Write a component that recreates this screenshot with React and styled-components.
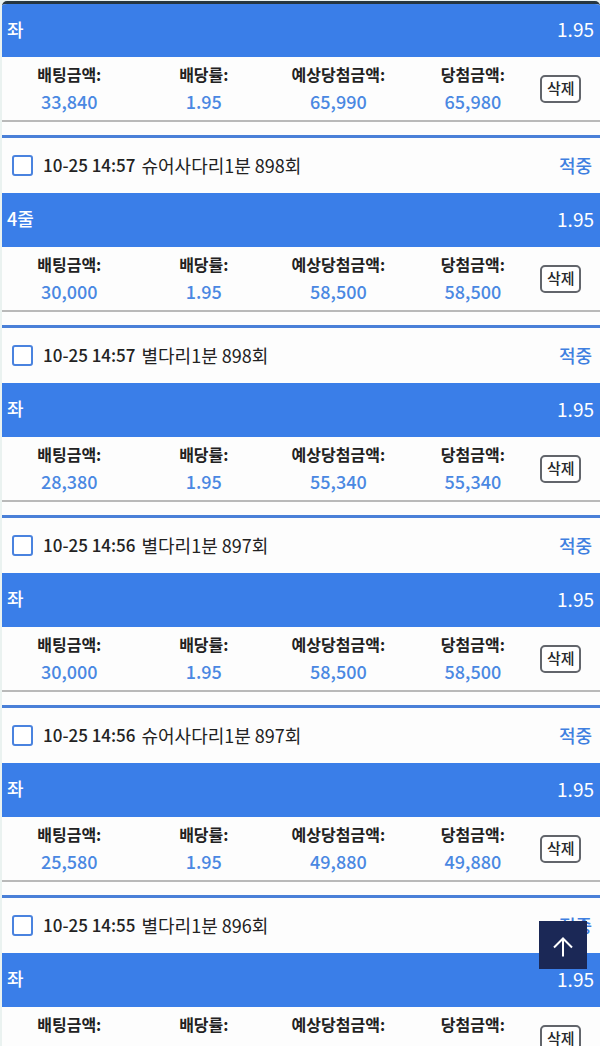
import React from 'react'
import styled, { createGlobalStyle } from 'styled-components'

const GlobalStyle = createGlobalStyle`
* {
  box-sizing: border-box;
}
body {
  margin: 0;
  background-color: #fdfdfd;
  font-family: "Noto Sans CJK KR", "Noto Sans", sans-serif;
  color: #222;
}
`;

const Page = styled.div`
height: 100vh;
overflow: hidden;
background-color: #eaf2f0;
padding: 1px 0 0 2px;
`;
const Screen = styled.main`
border-top: 3px solid #263640;
border-radius: 5px 5px 0 0;
background-color: #fdfdfd;
overflow: hidden;
`;
const Record = styled.article`
margin-bottom: 13px;
border-bottom: 2px solid #b9b9b9;
`;
const Header = styled.header`
display: flex;
align-items: center;
height: 58px;
border-top: 3px solid #4a80d8;
padding: 0 8px 2px 10px;
`;
const CheckLabel = styled.label`
display: flex;
align-items: center;
flex: 1;
font-size: 18px;
line-height: 24px;
white-space: nowrap;
`;
const Checkbox = styled.input`
appearance: none;
width: 21px;
height: 21px;
margin: 2px 10px 0 0;
border: 2px solid #4a83df;
border-radius: 3px;
background-color: #fff;
cursor: pointer;
&:checked {
  background-color: #3a7de8;
}
`;
const Time = styled.time`
margin-right: 6px;
font-size: 17px;
font-weight: 500;
`;
const Result = styled.strong`
font-size: 18px;
line-height: 24px;
font-weight: 500;
color: #3f7fe0;
`;
const Pick = styled.div`
display: flex;
align-items: center;
justify-content: space-between;
height: ${({$first}) => $first ? '53px' : '54px'};
padding: 0 6px 4px 5px;
background-color: #3a7ee8;
color: white;
font-size: 18px;
font-weight: 500;
`;
const Odds = styled.span`
font-size: 19px;
font-weight: 400;
`;
const Stats = styled.div`
display: grid;
grid-template-columns: repeat(4, 9fr) 4fr;
height: 63px;
padding-top: 4px;
`;
const List = styled.dl`
display: grid;
grid-template-columns: subgrid;
grid-column: span 4;
margin: 0;
`;
const Stat = styled.div`
text-align: center;
white-space: nowrap;
`;
const StatName = styled.dt`
font-size: 16px;
line-height: 27px;
font-weight: 700;
`;
const StatValue = styled.dd`
margin: 0;
font-size: 18px;
line-height: 27px;
font-weight: 500;
color: #4a88e2;
`;
const Delete = styled.button`
width: 41px;
height: 28px;
margin-top: 14px;
padding: 0 0 3px;
border: 2px solid #62656b;
border-radius: 5px;
background-color: #fff;
color: #25272c;
font-family: inherit;
font-size: 15px;
font-weight: 500;
line-height: 20px;
cursor: pointer;
`;
const TopButton = styled.button`
position: fixed;
right: 13px;
bottom: 77px;
display: flex;
align-items: center;
justify-content: center;
width: 48px;
height: 48px;
padding: 3px 0 0;
border: none;
background-color: #1b2856;
color: white;
cursor: pointer;
`;

const bets = [
  { pick: '좌', amount: '33,840', expected: '65,990', won: '65,980' },
  { time: '10-25 14:57', game: '슈어사다리1분 898회', pick: '4줄', amount: '30,000', expected: '58,500', won: '58,500' },
  { time: '10-25 14:57', game: '별다리1분 898회', pick: '좌', amount: '28,380', expected: '55,340', won: '55,340' },
  { time: '10-25 14:56', game: '별다리1분 897회', pick: '좌', amount: '30,000', expected: '58,500', won: '58,500' },
  { time: '10-25 14:56', game: '슈어사다리1분 897회', pick: '좌', amount: '25,580', expected: '49,880', won: '49,880' },
  { time: '10-25 14:55', game: '별다리1분 896회', pick: '좌', amount: '28,500', expected: '55,580', won: '55,570' },
];

function Bet({ bet }) {
  const stats = [
    ['배팅금액:', bet.amount],
    ['배당률:', '1.95'],
    ['예상당첨금액:', bet.expected],
    ['당첨금액:', bet.won],
  ];
  return (
    <Record>
      {bet.time && (
        <Header>
          <CheckLabel>
            <Checkbox type="checkbox" />
            <Time>{bet.time}</Time>
            <span>{bet.game}</span>
          </CheckLabel>
          <Result>적중</Result>
        </Header>
      )}
      <Pick $first={!bet.time}>
        <span>{bet.pick}</span>
        <Odds>1.95</Odds>
      </Pick>
      <Stats>
        <List>
          {stats.map(([name, value]) => (
            <Stat key={name}>
              <StatName>{name}</StatName>
              <StatValue>{value}</StatValue>
            </Stat>
          ))}
        </List>
        <Delete type="button">삭제</Delete>
      </Stats>
    </Record>
  )
}

function App() {
  return (
    <Page>
      <GlobalStyle />
      <Screen>
        {bets.map((bet, i) => <Bet key={i} bet={bet} />)}
      </Screen>
      <TopButton type="button" aria-label="맨 위로">
        <svg width="20" height="20" viewBox="0 0 20 20" fill="none" stroke="currentColor" strokeWidth="2">
          <path d="M10 19.5V2M1 10.5L10 1.5l9 9" />
        </svg>
      </TopButton>
    </Page>
  )
}

export default App
